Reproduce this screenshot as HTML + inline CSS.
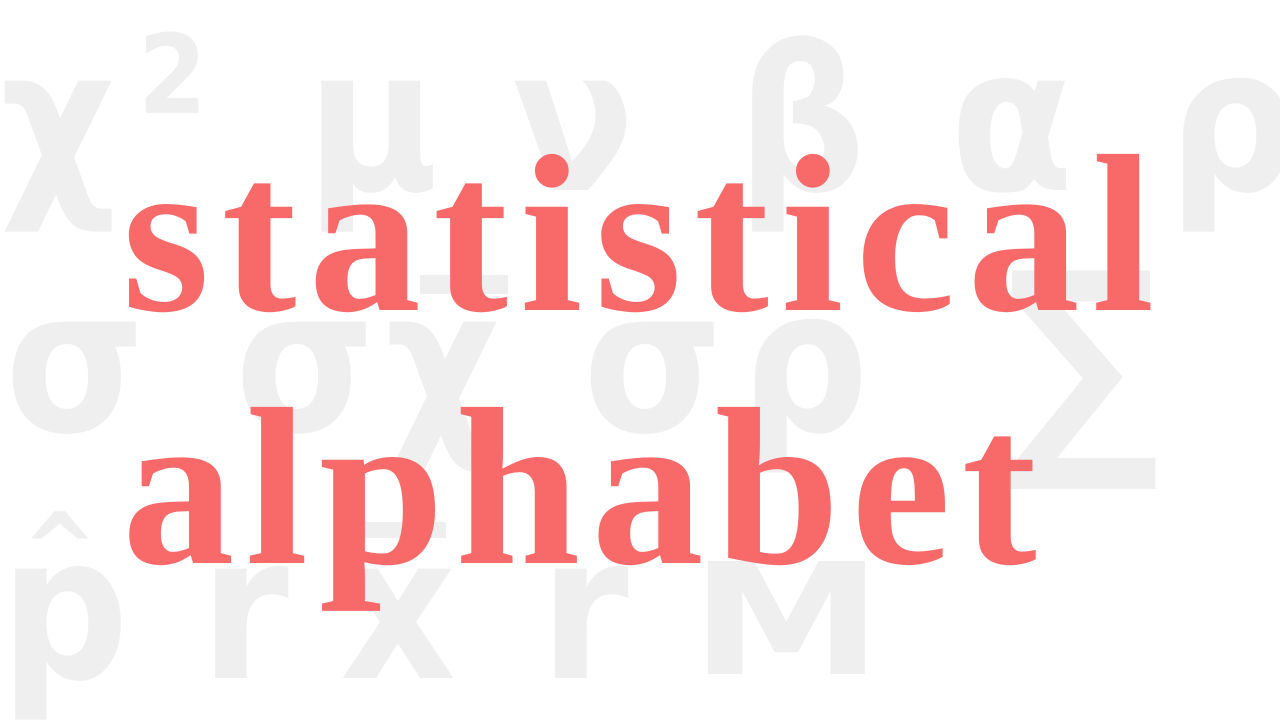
<!DOCTYPE html>
<html><head><meta charset="utf-8"><style>
html,body{margin:0;padding:0;width:1280px;height:720px;overflow:hidden;background:#fff}
.bg{position:absolute;font-family:"DejaVu Sans Condensed","DejaVu Sans","Liberation Sans",sans-serif;font-stretch:condensed;font-weight:bold;color:#efefef;font-size:200px;line-height:1;white-space:nowrap}
.fg{position:absolute;font-family:"Liberation Serif",serif;font-weight:bold;color:#f86a6a;font-size:225px;line-height:1;white-space:nowrap;letter-spacing:12px}
.bar{position:absolute;background:#efefef}
</style></head><body>
<div class="bg" style="left:0px;top:22px">χ</div>
<div class="bg" style="left:138px;top:20px;font-size:110px">2</div>
<div class="bg" style="left:306px;top:22px">μ</div>
<div class="bg" style="left:512px;top:22px">ν</div>
<div class="bg" style="left:737px;top:22px">β</div>
<div class="bg" style="left:950px;top:22px">α</div>
<div class="bg" style="left:1168px;top:22px">ρ</div>

<div class="bg" style="left:5px;top:263px">σ</div>
<div class="bg" style="left:235px;top:263px">σ</div>
<div class="bg" style="left:385px;top:263px">χ</div>
<div class="bg" style="left:583px;top:263px">σ</div>
<div class="bg" style="left:740px;top:263px">ρ</div>
<div class="bg" style="left:1005px;top:240px;font-size:240px">∑</div>
<div class="bar" style="left:420px;top:275px;width:88px;height:19px"></div>

<div class="bg" style="left:0px;top:510px">p</div>
<div class="bg" style="left:200px;top:510px">r</div>
<div class="bg" style="left:340px;top:510px">x</div>
<div class="bg" style="left:540px;top:510px">r</div>
<div class="bg" style="left:690px;top:543px;font-size:155px;font-family:'DejaVu Sans',sans-serif;font-stretch:normal;transform:scaleX(1.25);transform-origin:left top">M</div>
<div class="bg" style="left:22px;top:500px;font-size:100px">^</div>
<div class="bar" style="left:360px;top:522px;width:86px;height:16px"></div>

<div class="fg" style="left:122px;top:122px">statistical</div>
<div class="fg" style="left:122px;top:375px;letter-spacing:11px">alphabet</div>
</body></html>
